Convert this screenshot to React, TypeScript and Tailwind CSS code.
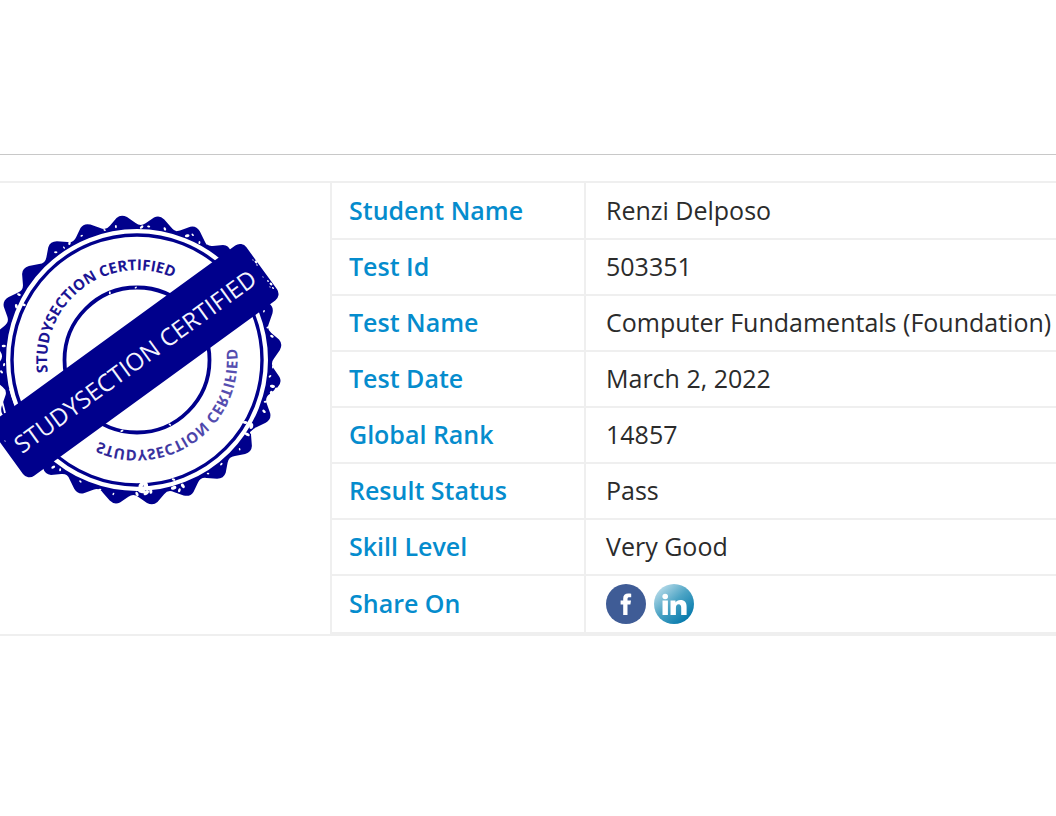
import React from "react";

const NAVY = "#00008c";
const CX = 137;
const CY = 360;

type Row = { label: string; value: string };

const rows: Row[] = [
  { label: "Student Name", value: "Renzi Delposo" },
  { label: "Test Id", value: "503351" },
  { label: "Test Name", value: "Computer Fundamentals (Foundation)" },
  { label: "Test Date", value: "March 2, 2022" },
  { label: "Global Rank", value: "14857" },
  { label: "Result Status", value: "Pass" },
  { label: "Skill Level", value: "Very Good" },
];

function polar(deg: number, r: number): [number, number] {
  const a = (deg * Math.PI) / 180;
  return [CX + r * Math.sin(a), CY - r * Math.cos(a)];
}

function at(deg: number, r: number): string {
  return polar(deg, r)
    .map((n) => n.toFixed(1))
    .join(" ");
}

function scallopPath(): string {
  const step = 15;
  let d = "";
  for (let i = 0; i < 24; i++) {
    const peak = -6 + i * step;
    d += `${i === 0 ? "M" : "L"}${at(peak - 2.2, 143.5)}Q${at(peak - 0.2, 147)} ${at(peak + 2, 143.2)}`;
    d += `L${at(peak + 5.4, 137)}Q${at(peak + 7.5, 133)} ${at(peak + 9.6, 137)}`;
  }
  return d + "Z";
}

// Worn spots in the ink: angle, radius, size
const specks: [number, number, number][] = [
  [-37, 135, 1.3], [-33, 134, 1], [-30, 135, 1.5], [-24, 136, 1], [-14, 134, 1], [-9, 135, 1.2],
  [2, 133, 1.6], [5, 134, 1.2], [12, 134, 1.4], [17, 136, 1], [22, 134, 1.8], [24, 137, 1.1],
  [28, 133, 1.2], [31, 136, 1], [-61, 135, 1.5], [-66, 132, 1.8], [-72, 138, 1], [-84, 134, 1.6],
  [-95, 136, 1.4], [-92, 133, 1.3], [76, 135, 1.2], [80, 137, 1.5], [93, 136, 1], [97, 134, 1.2],
  [101, 138, 2], [104, 139, 2.2], [102, 142, 1.6], [108, 135, 1.3], [112, 137, 1.6], [120, 132, 2.4],
  [122, 136, 2], [124, 133, 2], [131, 136, 1], [141, 134, 1.2], [148, 134, 1], [160, 134, 2],
  [162, 137, 1.6], [164, 133, 2.2], [165, 138, 1.4], [174, 132, 2], [176, 133, 2.4], [178, 131, 2.8],
  [180, 134, 1.8], [190, 136, 1], [196, 135, 1.2], [205, 134, 1.1], [215, 134, 1.2], [218, 136, 1.6],
  [163, 125, 1.4], [176, 125, 2.8], [178, 125, 2.6], [120, 125, 1.8], [62, 134, 1.3], [69, 136, 1],
  [192, 72.5, 1.2], [153, 72.5, 1.1], [-22, 72.5, 1.2], [-1, 72.5, 1], [-64, 126, 1.6],
];

const bannerSpecks: [number, number, number][] = [
  [256, 262, 1.6], [257, 265, 0.9], [253, 260, 0.8], [268, 281, 1.1], [271, 284, 1.7], [273, 288, 1.2],
  [270, 287, 0.8], [263, 277, 0.7], [5, 441, 0.8],
];

function Seal() {
  return (
    <svg
      viewBox="0 210 290 300"
      className="block h-[300px] w-[290px]"
      role="img"
      aria-label="StudySection Certified seal"
      fontFamily='"Open Sans", sans-serif'
    >
      <defs>
        <path id="upper-arc" d={`M${at(-98, 90)}A90 90 0 0 1 ${at(60, 90)}`} />
        <linearGradient id="worn-ink" x1="0" y1="1" x2="0" y2="0">
          <stop offset="0" stopColor="#2c2296" />
          <stop offset="0.5" stopColor="#3b339f" />
          <stop offset="1" stopColor="#5c54b4" />
        </linearGradient>
      </defs>
      <path d={scallopPath()} fill={NAVY} />
      <circle cx={CX} cy={CY} r="129" fill="#fff" stroke="#fff" strokeWidth="4" />
      <circle cx={CX} cy={CY} r="125" fill="none" stroke={NAVY} strokeWidth="3.4" />
      <circle cx={CX} cy={CY} r="72.5" fill="none" stroke={NAVY} strokeWidth="3.8" />
      {specks.map(([deg, r, s], i) => {
        const [x, y] = polar(deg, r);
        return (
          <ellipse
            key={i}
            cx={x}
            cy={y}
            rx={s * 1.3}
            ry={s * 0.8}
            transform={`rotate(${(i * 53) % 180} ${x} ${y})`}
            fill="#fff"
          />
        );
      })}
      <text fontSize="15" fontWeight="700" fill="#1b1494">
        <textPath href="#upper-arc">STUDYSECTION CERTIFIED</textPath>
      </text>
      <g transform={`rotate(-73 ${CX} ${CY}) translate(0 ${2 * CY}) scale(1 -1)`}>
        <text fontSize="15" fontWeight="700" fill="url(#worn-ink)">
          <textPath href="#upper-arc">STUDYSECTION CERTIFIED</textPath>
        </text>
      </g>
      <g transform="rotate(-36 133.5 361.5)">
        <rect x="-22" y="327.5" width="314" height="68" rx="8" fill={NAVY} />
        <text x="135" y="371" textAnchor="middle" fontSize="24" fill="#f4f4fd">
          STUDYSECTION CERTIFIED
        </text>
      </g>
      {bannerSpecks.map(([x, y, s], i) => (
        <ellipse key={i} cx={x} cy={y} rx={s} ry={s * 0.7} transform={`rotate(50 ${x} ${y})`} fill="#fff" />
      ))}
      <path d="M0 397l2 4 3 12M0 404v8M10 389l5 15" fill="none" stroke="#fff" strokeWidth="1.8" />
    </svg>
  );
}

function FacebookIcon() {
  return (
    <svg viewBox="0 0 40 40" className="block size-10" aria-hidden="true">
      <circle cx="20" cy="20" r="20" fill="#3f5c96" />
      <path
        d="M17.2 31V20.4h-2.6v-4h2.6v-2c0-3.3 1.8-5 5-5 1.2 0 2.3.1 3 .3v3.6h-1.7c-1.5 0-2 .6-2 1.8v1.3h3.5l-.6 4h-2.9V31z"
        fill="#fff"
      />
    </svg>
  );
}

function LinkedInIcon() {
  return (
    <svg viewBox="0 0 40 40" className="block size-10" aria-hidden="true">
      <defs>
        <linearGradient id="in-fill" x1="0.1" y1="0.1" x2="0.8" y2="0.9">
          <stop offset="0" stopColor="#b9dcea" />
          <stop offset="0.5" stopColor="#4ba3c4" />
          <stop offset="1" stopColor="#087bad" />
        </linearGradient>
      </defs>
      <circle cx="20" cy="20" r="20" fill="url(#in-fill)" />
      <circle cx="11.2" cy="12.5" r="2.8" fill="#fff" />
      <path
        d="M8.5 16.5h5.4V31H8.5zM16.5 16.5h5v2c.9-1.5 2.5-2.4 4.9-2.4 4.3 0 6.2 2.4 6.2 6.7V31h-5.4v-7.3c0-2.2-.8-3.4-2.5-3.4-1.9 0-2.8 1.4-2.8 3.7v7h-5.4z"
        fill="#fff"
      />
    </svg>
  );
}

export default function App() {
  return (
    <main className="min-h-screen overflow-x-hidden bg-white pt-[154px] font-['Open_Sans',sans-serif] text-[25px] text-[#2b2b2b]">
      <hr className="border-t border-[#c8c8c8]" />
      <section className="mt-[26px] flex border-y-2 border-[#efefef]">
        <div className="w-[330px] shrink-0 pt-[27px]">
          <Seal />
        </div>
        <table className="grow border-collapse border-b-2 border-l-2 border-[#efefef] text-left">
          <tbody>
            {rows.map(({ label, value }) => (
              <tr key={label} className="h-14 border-b-2 border-[#efefef]">
                <th scope="row" className="w-[254px] border-r-2 border-[#efefef] pl-[17px] font-semibold text-[#058ccd]">
                  {label}
                </th>
                <td className="whitespace-nowrap pl-5">{value}</td>
              </tr>
            ))}
            <tr className="h-[58px]">
              <th scope="row" className="w-[254px] border-r-2 border-[#efefef] pl-[17px] font-semibold text-[#058ccd]">
                Share On
              </th>
              <td className="pl-5">
                <div className="flex gap-2">
                  <a href="#facebook" aria-label="Share on Facebook">
                    <FacebookIcon />
                  </a>
                  <a href="#linkedin" aria-label="Share on LinkedIn">
                    <LinkedInIcon />
                  </a>
                </div>
              </td>
            </tr>
          </tbody>
        </table>
      </section>
    </main>
  );
}
